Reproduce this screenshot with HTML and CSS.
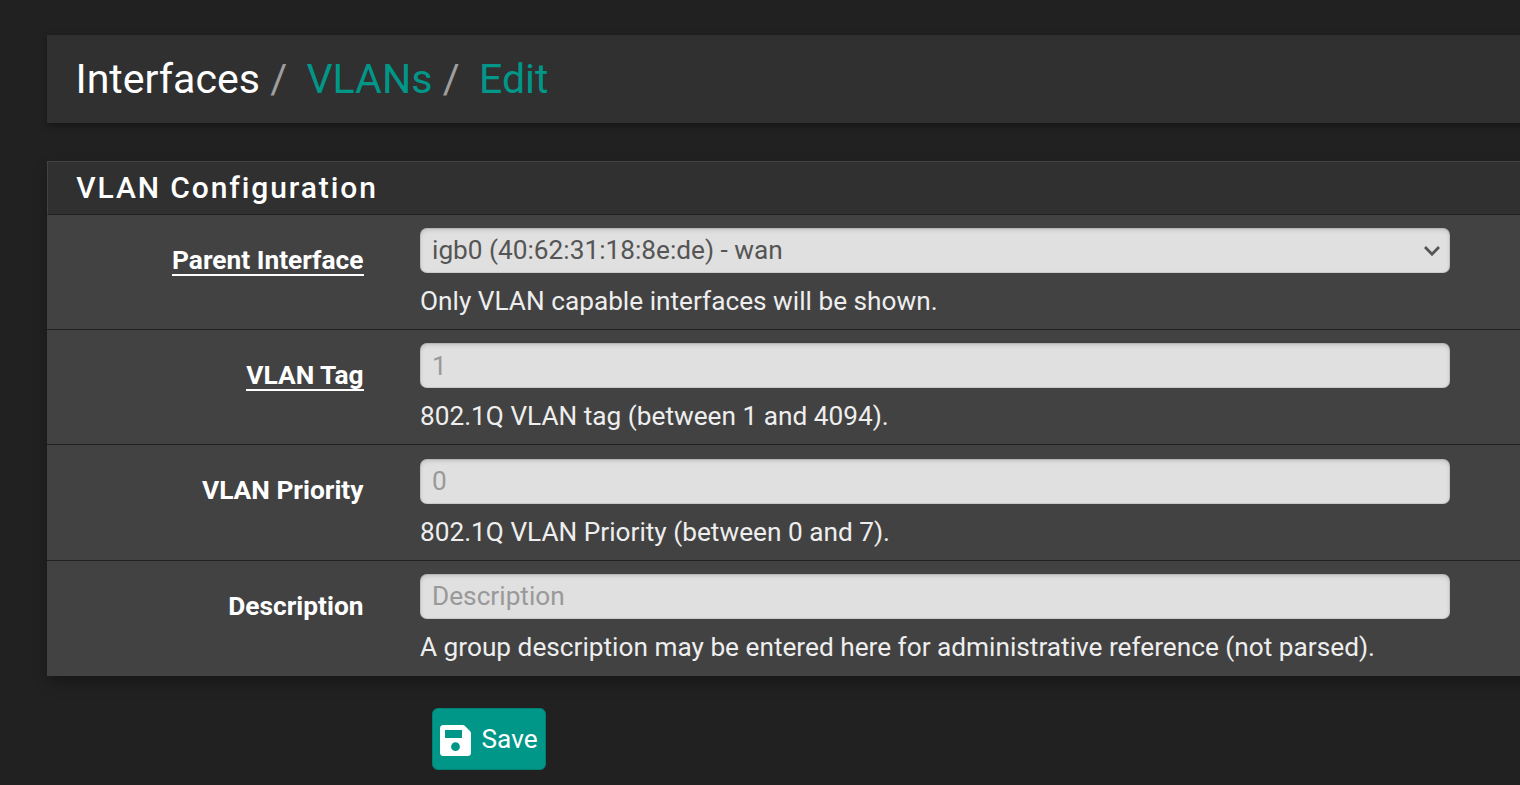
FILE: index.html
```html
<!DOCTYPE html>
<html lang="en">
<head>
<meta charset="utf-8">
<title>Interfaces: VLANs: Edit</title>
<link rel="stylesheet" href="styles.css">
</head>
<body>
<header class="page-header">
  <ol class="breadcrumb">
    <li>Interfaces</li>
    <li><a>VLANs</a></li>
    <li><a>Edit</a></li>
  </ol>
</header>
<form>
  <section class="panel">
    <h2 class="panel-heading">VLAN Configuration</h2>
    <div class="form-group">
      <div class="label"><span class="required">Parent Interface</span></div>
      <div class="field">
        <div class="control select"><span>igb0 (40:62:31:18:8e:de) - wan</span>
          <svg class="chevron" viewBox="0 0 16 10"><path d="M1 1 8 8.200 15 1"/></svg>
        </div>
        <p class="help">Only VLAN capable interfaces will be shown.</p>
      </div>
    </div>
    <div class="form-group">
      <div class="label"><span class="required">VLAN Tag</span></div>
      <div class="field">
        <input class="control" type="text" placeholder="1">
        <p class="help">802.1Q VLAN tag (between 1 and 4094).</p>
      </div>
    </div>
    <div class="form-group">
      <div class="label"><span>VLAN Priority</span></div>
      <div class="field">
        <input class="control" type="text" placeholder="0">
        <p class="help">802.1Q VLAN Priority (between 0 and 7).</p>
      </div>
    </div>
    <div class="form-group">
      <div class="label"><span>Description</span></div>
      <div class="field">
        <input class="control" type="text" placeholder="Description">
        <p class="help">A group description may be entered here for administrative reference (not parsed).</p>
      </div>
    </div>
  </section>
  <button class="save" type="button">
    <svg class="save-icon" viewBox="0 0 31 31"><path fill-rule="evenodd" d="M3.500 0H22.500Q24 0 25 1L30 6Q31 7 31 8.500V27.500Q31 31 27.500 31H3.500Q0 31 0 27.500V3.500Q0 0 3.500 0ZM5 5V13H22V5ZM15.500 17.300a4.400 4.400 0 1 0 0 8.800a4.400 4.400 0 1 0 0-8.800Z"/></svg>
    <span>Save</span>
  </button>
</form>
</body>
</html>
```
FILE: styles.css
```css
* { box-sizing: border-box; }
body {
  margin: 0;
  height: 785px;
  padding: 35px 0 0 47px;
  overflow: hidden;
  background: #212121;
  color: #fff;
  font: 26.22px/37px Roboto, "Liberation Sans", sans-serif;
}
.page-header {
  height: 88px;
  padding: 0 28.5px;
  display: flex;
  align-items: center;
  background: #303030;
  box-shadow: 0 3px 7px rgba(0, 0, 0, .35);
  margin-right: -20px;
}
.breadcrumb {
  display: flex;
  margin: 0;
  padding: 0;
  list-style: none;
  font-size: 41.1px;
  line-height: 56px;
}
.breadcrumb li + li::before {
  content: "/";
  padding: 0 19.2px 0 10.3px;
  color: #9e9e9e;
}
.breadcrumb a { color: #009688; }
.panel {
  margin: 38px -20px 0 0;
  background: #424242;
  box-shadow: 0 7px 14px -2px rgba(0, 0, 0, .35);
}
.panel-heading {
  height: 54px;
  margin: 0;
  padding: 0 28.3px;
  border: 1px solid #424242;
  border-bottom-color: #212121;
  background: #303030;
  font-size: 30px;
  line-height: 52px;
  font-weight: 500;
  letter-spacing: 1.9px;
}
.form-group {
  display: flex;
  height: 115.2px;
  padding-top: 13.2px;
  border-bottom: 1px solid #212121;
}
.form-group:last-child { border-bottom: 0; }
.label {
  width: 316.5px;
  margin-right: 56.5px;
  padding-top: 13.8px;
  text-align: right;
  font-size: 26.3px;
  font-weight: 700;
}
.label span {
  display: inline-block;
  line-height: 27px;
}
.label .required { border-bottom: 2px solid #fff; }
.field { width: 1030px; }
.control {
  display: flex;
  justify-content: space-between;
  align-items: center;
  width: 100%;
  height: 45px;
  padding: 0 10px 0 12px;
  border: 0;
  border-radius: 7px;
  background: #e0e0e0;
  box-shadow: inset 0 2px 4px rgba(0, 0, 0, .15), inset 0 0 0 1px rgba(0, 0, 0, .08);
  color: #555;
  font: inherit;
}
.control::placeholder { color: #999; opacity: 1; }
.chevron {
  width: 16px;
  height: 10px;
  fill: none;
  stroke: #555;
  stroke-width: 2.8;
}
.help {
  margin: 10px 0 0;
  color: #eee;
  white-space: nowrap;
}
.save {
  display: flex;
  align-items: center;
  gap: 10.5px;
  width: 114px;
  height: 62px;
  margin: 32.3px 0 0 385px;
  padding: 0 7px;
  border: 1px solid #008073;
  border-radius: 6px;
  background: #009688;
  color: #fff;
  font: inherit;
}
.save-icon {
  flex: none;
  width: 31px;
  height: 31px;
  margin-top: 2px;
  fill: #fff;
}
```
